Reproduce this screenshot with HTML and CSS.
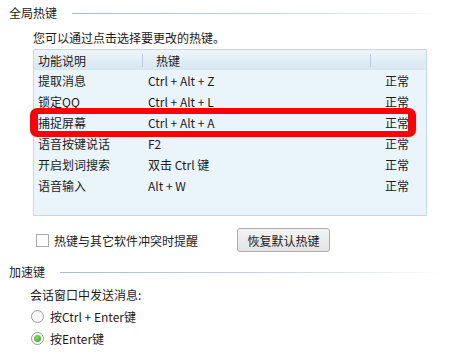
FILE: index.html
```html
<!DOCTYPE html>
<html>
<head>
<meta charset="utf-8">
<link rel="stylesheet" href="styles.css">
</head>
<body>
<div class="page">
  <div class="group-title">
    <span class="group-label">全局热键</span>
    <span class="group-line"></span>
  </div>
  <div class="hint">您可以通过点击选择要更改的热键。</div>
  <div class="table">
    <div class="thead">
      <div class="c1">功能说明</div>
      <div class="c2 th2">热键</div>
      <div class="c3"></div>
    </div>
    <div class="row"><div class="c1">提取消息</div><div class="c2">Ctrl + Alt + Z</div><div class="c3">正常</div></div>
    <div class="row"><div class="c1">锁定QQ</div><div class="c2">Ctrl + Alt + L</div><div class="c3">正常</div></div>
    <div class="row"><div class="c1">捕捉屏幕</div><div class="c2">Ctrl + Alt + A</div><div class="c3">正常</div></div>
    <div class="row"><div class="c1">语音按键说话</div><div class="c2">F2</div><div class="c3">正常</div></div>
    <div class="row"><div class="c1">开启划词搜索</div><div class="c2">双击 Ctrl 键</div><div class="c3">正常</div></div>
    <div class="row"><div class="c1">语音输入</div><div class="c2">Alt + W</div><div class="c3">正常</div></div>
    <div class="highlight"></div>
  </div>
  <div class="options">
    <label class="check"><span class="box"></span><span>热键与其它软件冲突时提醒</span></label>
    <button class="btn">恢复默认热键</button>
  </div>
  <div class="group-title second">
    <span class="group-label">加速键</span>
    <span class="group-line"></span>
  </div>
  <div class="sub">会话窗口中发送消息:</div>
  <div class="radio-row"><span class="radio"></span><span>按Ctrl + Enter键</span></div>
  <div class="radio-row"><span class="radio on"></span><span>按Enter键</span></div>
</div>
</body>
</html>
```

FILE: styles.css
```css
html, body {
  margin: 0;
  padding: 0;
  background: #ffffff;
}
body {
  font-family: "Noto Sans CJK SC", "Noto Sans", sans-serif;
  font-size: 12px;
  color: #1b1b1b;
}
.page {
  width: 458px;
  height: 363px;
  overflow: hidden;
}
.group-title {
  display: flex;
  align-items: center;
  height: 26px;
  padding-left: 9px;
  padding-right: 17px;
}
.group-title.second {
  margin-top: 7px;
}
.group-label {
  line-height: 16px;
}
.group-line {
  flex: 1;
  height: 1px;
  margin-left: 15px;
  margin-top: 1px;
  background: linear-gradient(to right, #a9bccb, #c6d4de 55%, #eef2f5 90%, rgba(255,255,255,0));
}
.second .group-line {
  margin-left: 15px;
}
.hint {
  margin-left: 33px;
  margin-top: 3px;
  height: 18px;
  line-height: 18px;
}
.table {
  position: relative;
  margin-left: 33px;
  margin-top: 2px;
  width: 392px;
  height: 165px;
  border: 1px solid #c8d8e3;
  background: #eaf4fb;
}
.thead, .row {
  display: flex;
  align-items: center;
}
.thead {
  height: 20px;
  background: linear-gradient(to bottom, #eef5fa, #d7e6f1);
}
.row {
  height: 21px;
}
.c1 {
  width: 108px;
  padding-left: 4px;
  box-sizing: border-box;
}
.c2 {
  width: 228px;
  padding-left: 6px;
  box-sizing: border-box;
}
.c3 {
  flex: 1;
  padding-left: 15px;
}
.thead .c2, .thead .c3 {
  border-left: 1px solid #b9c9d5;
  height: 13px;
  line-height: 13px;
}
.th2 {
  padding-left: 13px;
}
.highlight {
  position: absolute;
  left: -4px;
  top: 58px;
  width: 386px;
  height: 29px;
  box-sizing: border-box;
  border: 6px solid #ff0000;
  border-left-width: 8px;
  border-right-width: 8px;
  border-radius: 7px;
}
.options {
  display: flex;
  align-items: center;
  margin-left: 36px;
  margin-top: 12px;
  height: 24px;
}
.check {
  display: flex;
  align-items: center;
  width: 201px;
}
.box {
  width: 11px;
  height: 11px;
  border: 1px solid #a9a9a9;
  background: #ffffff;
  margin-right: 5px;
}
.btn {
  width: 93px;
  height: 24px;
  padding: 0;
  font-family: "Noto Sans CJK SC", "Noto Sans", sans-serif;
  font-size: 12px;
  color: #1b1b1b;
  border: 1px solid #acacac;
  border-radius: 3px;
  background: linear-gradient(to bottom, #f3f3f3, #e4e4e4);
}
.sub {
  margin-left: 30px;
  height: 20px;
  line-height: 20px;
}
.radio-row {
  display: flex;
  align-items: center;
  margin-left: 31px;
  height: 22px;
}
.radio {
  position: relative;
  width: 11px;
  height: 11px;
  border: 1px solid #9a9a9a;
  border-radius: 50%;
  background: linear-gradient(to bottom, #f4f4f4, #ffffff);
  margin-right: 6px;
}
.radio.on::after {
  content: "";
  position: absolute;
  left: 2px;
  top: 2px;
  width: 7px;
  height: 7px;
  border-radius: 50%;
  background: radial-gradient(circle at 40% 35%, #8fd66e, #3d9a22);
}
```
